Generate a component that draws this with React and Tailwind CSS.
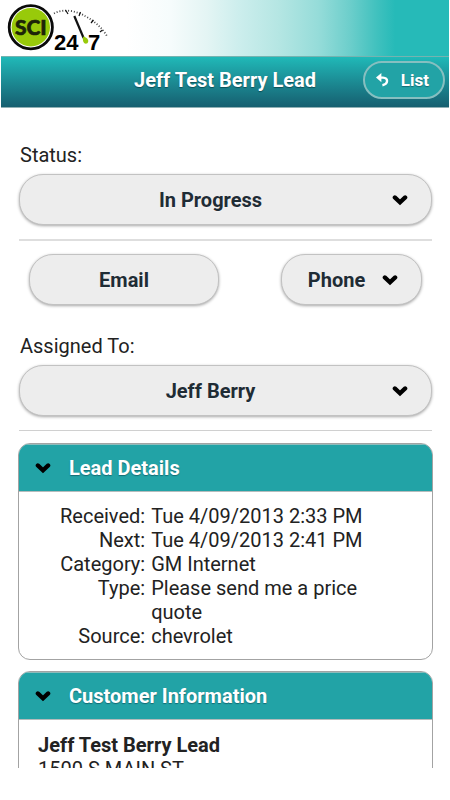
import React from 'react';

const control =
  'h-[51px] w-full appearance-none rounded-3xl border border-[#c2c2c2] bg-[#ededed] text-center text-xl font-bold text-[#1f2c35] shadow-[0_1px_3px_rgba(0,0,0,0.35)] [text-shadow:0_1px_0_#f3f3f3]';

function Chevron() {
  return (
    <svg width="16" height="12" viewBox="0 0 16 12" fill="none" stroke="#000" strokeWidth="4.2" aria-hidden="true">
      <path d="M2.8 3.4 L8 8.3 L13.2 3.4" strokeLinejoin="miter" strokeLinecap="round" />
    </svg>
  );
}

function Logo() {
  return (
    <svg width="112" height="56" viewBox="0 0 112 56" role="img" aria-label="SCI 24-7">
      <circle cx="30.8" cy="27.2" r="21.6" fill="#fff" stroke="#0a0a0a" strokeWidth="2.8" />
      <circle cx="30.8" cy="27.2" r="19.2" fill="#98ca0a" />
      <text
        x="30.8"
        y="34.5"
        textAnchor="middle"
        fontSize="21"
        stroke="#1c2408"
        strokeWidth="0.6"
        className="fill-[#1c2408] font-[Lato,sans-serif] font-black"
      >
        SCI
      </text>
      <path d="M54 13.5 C63 8.5 76 10.5 85 16 C96 22 103 29 107.5 37" fill="none" stroke="#444" strokeWidth="1.8" strokeDasharray="1 1.9" />
      <path d="M65.5 10 L68 14 M80.5 12 L79 16 M93.5 20 L91 23 M102.5 30 L100 32" stroke="#111" strokeWidth="1.2" />
      <path d="M74.3 16 L83.6 38" stroke="#111" strokeWidth="2.2" />
      <path d="M83.2 36.5 C88 37.5 89.4 41 87.4 43.2 C84.5 44.8 82 42 83.2 36.5 Z" fill="#98ca0a" />
      <g fontSize="22" className="fill-black font-['Liberation_Sans',sans-serif] font-bold">
        <text x="54" y="50">24</text>
        <text x="88" y="50">7</text>
      </g>
    </svg>
  );
}

function Dropdown({ id, label, options, className }) {
  return (
    <div className={`grid items-center ${className}`}>
      <select
        id={id}
        aria-label={label}
        className={`${control} pr-[38px] pl-2 [grid-area:1/1] [text-align-last:center]`}
      >
        {options.map((o) => (
          <option key={o}>{o}</option>
        ))}
      </select>
      <span className="pointer-events-none mr-6 justify-self-end [grid-area:1/1]">
        <Chevron />
      </span>
    </div>
  );
}

function Panel({ title, children }) {
  return (
    <section className="overflow-hidden rounded-xl border border-[#a3a3a3]">
      <h2>
        <button
          type="button"
          aria-expanded="true"
          className="flex h-12 w-full items-center gap-[18px] border-t border-b border-t-[#8ebcbc] border-b-[#b5bcbc] bg-[#22a3a6] px-4 text-left text-xl font-bold text-white [text-shadow:0_1px_1px_#146c74]"
        >
          <Chevron />
          {title}
        </button>
      </h2>
      {children}
    </section>
  );
}

const details = [
  ['Received:', 'Tue 4/09/2013 2:33 PM'],
  ['Next:', 'Tue 4/09/2013 2:41 PM'],
  ['Category:', 'GM Internet'],
  ['Type:', 'Please send me a price quote'],
  ['Source:', 'chevrolet'],
];

export default function App() {
  return (
    <div className="flex h-dvh flex-col bg-white pb-8 font-[Roboto,sans-serif] text-xl leading-6 text-[#222]">
      <div className="min-h-0 flex-1 overflow-hidden">
        <header>
          <div className="mr-px h-14 bg-[linear-gradient(90deg,#fff_0%,#fff_28%,#f6fcfc_38%,#e4f5f4_46%,#cdeeed_53%,#b5e6e3_62%,#95dcd9_71%,#6ccecb_78%,#40c1be_84%,#26bab8_88%)]">
            <Logo />
          </div>
          <div className="mx-px grid h-[52px] grid-cols-[1fr_auto_1fr] items-center border-t border-b border-t-[#75b3b0] border-b-[#8fb0b4] bg-linear-to-b from-[#20b9b8] to-[#165f70]">
            <h1 className="col-start-2 pb-1 text-xl leading-6 font-bold text-white [text-shadow:0_1px_1px_#0d4f58]">
              Jeff Test Berry Lead
            </h1>
            <button
              type="button"
              className="mr-1 mb-1 flex h-[38px] w-[82px] items-center justify-between justify-self-end rounded-full border-2 border-[#86bfc0] bg-[#22a3a6] pr-[14px] pl-[11px] text-[17px] font-bold text-white [text-shadow:0_1px_1px_#146c74]"
            >
              <svg width="13" height="14" viewBox="0 0 13 14" aria-hidden="true">
                <path d="M0 4.6 L5.4 0 V9.2 Z" fill="#fff" />
                <path d="M4.5 4.6 H7 C12.6 4.8 12.4 11 6.4 12.2" fill="none" stroke="#fff" strokeWidth="2.4" />
              </svg>
              List
            </button>
          </div>
        </header>

        <main className="flex flex-col pt-[35px] pr-[17px] pl-[18px]">
          <div className="px-px">
            <label htmlFor="status" className="block pb-[7px] pl-px">
              Status:
            </label>
            <Dropdown id="status" options={['In Progress', 'New', 'Closed']} className="" />
            <hr className="mt-3.5 border-t-2 border-[#dedede]" />
            <div className="flex justify-between px-2.5 pt-[13px] pb-[29px]">
              <div className="w-[190px]">
                <button type="button" className={control}>
                  Email
                </button>
              </div>
              <Dropdown id="phone" label="Phone" options={['Phone']} className="w-[141px]" />
            </div>
            <label htmlFor="assigned" className="block pb-[7px] pl-px">
              Assigned To:
            </label>
            <Dropdown id="assigned" options={['Jeff Berry']} className="" />
            <hr className="mt-3.5 border-[#d0d0d0]" />
          </div>

          <div className="flex flex-col gap-[11px] pt-3">
            <Panel title="Lead Details">
              <dl className="grid grid-cols-[auto_1fr] gap-x-1.5 pt-3 pr-8 pb-[11px] pl-[41px]">
                {details.map(([k, v]) => (
                  <React.Fragment key={k}>
                    <dt className="text-right">{k}</dt>
                    <dd>{v}</dd>
                  </React.Fragment>
                ))}
              </dl>
            </Panel>
            <Panel title="Customer Information">
              <address className="px-[19px] pt-[13px] pb-24 not-italic">
                <strong className="block font-bold">Jeff Test Berry Lead</strong>
                1500 S MAIN ST
              </address>
            </Panel>
          </div>
        </main>
      </div>
    </div>
  );
}
